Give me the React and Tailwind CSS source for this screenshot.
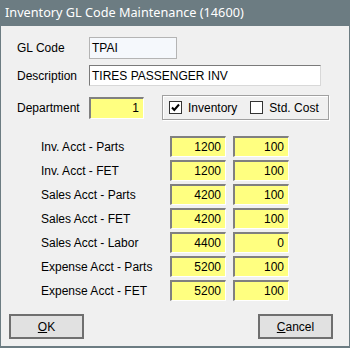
const font = { fontFamily: '"Liberation Sans", Arial, sans-serif' };

const accounts = [
  { label: 'Inv. Acct - Parts', a: '1200', b: '100' },
  { label: 'Inv. Acct - FET', a: '1200', b: '100' },
  { label: 'Sales Acct - Parts', a: '4200', b: '100' },
  { label: 'Sales Acct - FET', a: '4200', b: '100' },
  { label: 'Sales Acct - Labor', a: '4400', b: '0' },
  { label: 'Expense Acct - Parts', a: '5200', b: '100' },
  { label: 'Expense Acct - FET', a: '5200', b: '100' },
];

const sunken =
  'border-t-2 border-l-2 border-b border-r border-t-[#808080] border-l-[#808080] border-b-white border-r-white';

function YellowBox({ value, className = '' }) {
  return (
    <div className={`${sunken} bg-[#ffff80] h-[21px] flex items-center justify-end pr-[4px] text-[12px] text-black ${className}`}>
      {value}
    </div>
  );
}

function CheckBox({ checked, label }) {
  return (
    <div className="flex items-center gap-[6px]">
      <div className="w-[13px] h-[13px] bg-white border border-[#333] flex items-center justify-center">
        {checked && (
          <svg width="9" height="9" viewBox="0 0 9 9">
            <path d="M1 4.5 L3.3 7 L8 1.5" fill="none" stroke="#000" strokeWidth="2" />
          </svg>
        )}
      </div>
      <span className="text-[12px] text-black">{label}</span>
    </div>
  );
}

function Button({ children }) {
  return (
    <button className="w-[75px] h-[25px] bg-[#e1e1e1] border-2 border-[#6f6f6f] text-[12px] text-black flex items-center justify-center">
      {children}
    </button>
  );
}

export default function App() {
  return (
    <div className="w-[350px] h-[348px] bg-[#6c7c82] flex flex-col" style={font}>
      {/* Title bar */}
      <div className="h-[26px] flex items-center pl-[5px] text-white text-[12.7px]" style={{ fontFamily: '"Noto Sans", sans-serif' }}>
        Inventory GL Code Maintenance (14600)
      </div>

      <div className="flex-1 bg-[#f0f0f0] mx-[1px] mb-[2px] flex flex-col pl-[16px]">
        {/* GL Code */}
        <div className="flex items-center mt-[11px] h-[22px]">
          <span className="w-[72px] text-[12px] text-black">GL Code</span>
          <div className="w-[88px] h-[22px] border border-[#b4b4b4] bg-[#f5f8fc] flex items-center pl-[2px] text-[12px] text-black">
            TPAI
          </div>
        </div>

        {/* Description */}
        <div className="flex items-center mt-[6px] h-[21px]">
          <span className="w-[72px] text-[12px] text-black">Description</span>
          <div className="w-[232px] h-[21px] border border-[#7a7a7a] border-b-[#d8d8d8] border-r-[#d8d8d8] bg-white flex items-center pl-[2px] text-[12px] text-black">
            TIRES PASSENGER INV
          </div>
        </div>

        {/* Department */}
        <div className="flex items-center mt-[9px] h-[25px]">
          <span className="w-[72px] text-[12px] text-black">Department</span>
          <YellowBox value="1" className="w-[55px] h-[22px]" />
          <div className="ml-[18px] w-[167px] h-[25px] border border-[#a0a0a0] shadow-[inset_1px_1px_0_#fff,1px_1px_0_#fff] flex items-center pl-[6px] gap-[13px]">
            <CheckBox checked label="Inventory" />
            <CheckBox label="Std. Cost" />
          </div>
        </div>

        {/* Accounts */}
        <div className="flex flex-col gap-[3px] mt-[16px] pl-[24px]">
          {accounts.map((r) => (
            <div key={r.label} className="flex items-center h-[21px]">
              <span className="w-[129px] text-[12px] text-black">{r.label}</span>
              <YellowBox value={r.a} className="w-[56px]" />
              <YellowBox value={r.b} className="w-[56px] ml-[7px]" />
            </div>
          ))}
        </div>

        {/* Buttons */}
        <div className="flex justify-between mt-[13px] -ml-[8px] mr-[16px]">
          <Button>
            <span className="underline">O</span>K
          </Button>
          <Button>
            <span className="underline">C</span>ancel
          </Button>
        </div>
      </div>
    </div>
  );
}
